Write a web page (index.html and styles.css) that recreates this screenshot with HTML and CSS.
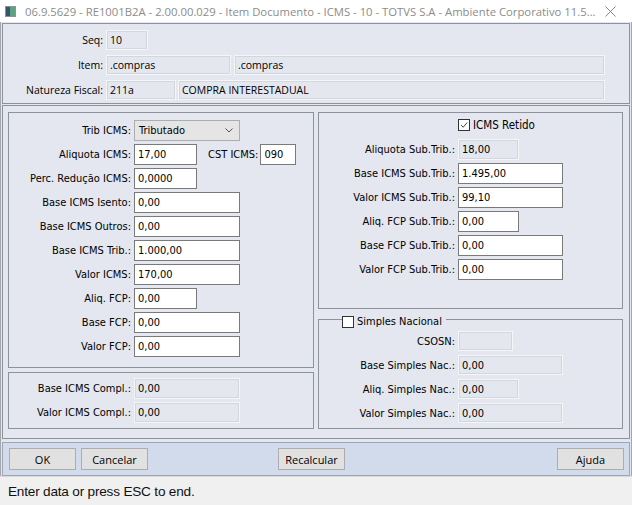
FILE: index.html
```html
<!DOCTYPE html>
<html>
<head>
<meta charset="utf-8">
<link rel="stylesheet" href="styles.css">
</head>
<body>
<div class="window">
  <div class="titlebar">
    <svg class="appicon" viewBox="0 0 11 11"><rect x="0.5" y="0.5" width="10" height="10" fill="#dfe3e8" stroke="#8a939b"/><rect x="1" y="1" width="4" height="9" fill="#35566a"/><rect x="5" y="1" width="5" height="9" fill="#5da383"/></svg>
    <span class="title">06.9.5629 - RE1001B2A - 2.00.00.029 - Item Documento - ICMS - 10 - TOTVS S.A - Ambiente Corporativo 11.5...</span>
    <svg class="close" viewBox="0 0 12 12"><path d="M0.5 0.5 L11.5 11.5 M11.5 0.5 L0.5 11.5" stroke="#7a7a7a" stroke-width="1" fill="none"/></svg>
  </div>
  <div class="client">
    <div class="group topgroup">
      <div class="trow"><span class="tlbl">Seq:</span><span class="fld dis w-seq">10</span></div>
      <div class="trow"><span class="tlbl">Item:</span><span class="fld dis w-item1">.compras</span><span class="fld dis w-item2">.compras</span></div>
      <div class="trow"><span class="tlbl">Natureza Fiscal:</span><span class="fld dis w-nat1">211a</span><span class="fld dis w-nat2">COMPRA INTERESTADUAL</span></div>
    </div>
    <div class="group maingroup">
      <div class="col">
        <div class="box icms">
          <div class="frow"><span class="lbl">Trib ICMS:</span><span class="combo">Tributado<svg class="chev" viewBox="0 0 8 5"><path d="M0.5 0.5 L4 4 L7.5 0.5" stroke="#555" fill="none"/></svg></span></div>
          <div class="frow"><span class="lbl">Aliquota ICMS:</span><span class="fld en w-short">17,00</span><span class="lbl2">CST ICMS:</span><span class="fld en w-cst">090</span></div>
          <div class="frow"><span class="lbl">Perc. Redução ICMS:</span><span class="fld en w-short">0,0000</span></div>
          <div class="frow"><span class="lbl">Base ICMS Isento:</span><span class="fld en w-long">0,00</span></div>
          <div class="frow"><span class="lbl">Base ICMS Outros:</span><span class="fld en w-long">0,00</span></div>
          <div class="frow"><span class="lbl">Base ICMS Trib.:</span><span class="fld en w-long">1.000,00</span></div>
          <div class="frow"><span class="lbl">Valor ICMS:</span><span class="fld en w-long">170,00</span></div>
          <div class="frow"><span class="lbl">Aliq. FCP:</span><span class="fld en w-short">0,00</span></div>
          <div class="frow"><span class="lbl">Base FCP:</span><span class="fld en w-long">0,00</span></div>
          <div class="frow"><span class="lbl">Valor FCP:</span><span class="fld en w-long">0,00</span></div>
        </div>
        <div class="box compl">
          <div class="frow"><span class="lbl">Base ICMS Compl.:</span><span class="fld dis w-long">0,00</span></div>
          <div class="frow"><span class="lbl">Valor ICMS Compl.:</span><span class="fld dis w-long">0,00</span></div>
        </div>
      </div>
      <div class="col">
        <div class="box st">
          <div class="crow"><span class="chk"><svg viewBox="0 0 12 12"><path d="M2.5 6 L5 8.7 L9.8 3" stroke="#333" stroke-width="1.1" fill="none"/></svg></span><span class="clbl">ICMS Retido</span></div>
          <div class="frow"><span class="rlbl">Aliquota Sub.Trib.:</span><span class="fld dis w-rshort">18,00</span></div>
          <div class="frow"><span class="rlbl">Base ICMS Sub.Trib.:</span><span class="fld en w-rlong">1.495,00</span></div>
          <div class="frow"><span class="rlbl">Valor ICMS Sub.Trib.:</span><span class="fld en w-rlong">99,10</span></div>
          <div class="frow"><span class="rlbl">Aliq. FCP Sub.Trib.:</span><span class="fld en w-rshort">0,00</span></div>
          <div class="frow"><span class="rlbl">Base FCP Sub.Trib.:</span><span class="fld en w-rlong">0,00</span></div>
          <div class="frow"><span class="rlbl">Valor FCP Sub.Trib.:</span><span class="fld en w-rlong">0,00</span></div>
        </div>
        <div class="box simples">
          <div class="legend"><span class="chk"></span><span class="clbl">Simples Nacional</span></div>
          <div class="frow"><span class="rlbl">CSOSN:</span><span class="fld dis w-csosn"></span></div>
          <div class="frow"><span class="rlbl">Base Simples Nac.:</span><span class="fld dis w-rlong">0,00</span></div>
          <div class="frow"><span class="rlbl">Aliq. Simples Nac.:</span><span class="fld dis w-rshort">0,00</span></div>
          <div class="frow"><span class="rlbl">Valor Simples Nac.:</span><span class="fld dis w-rlong">0,00</span></div>
        </div>
      </div>
    </div>
    <div class="buttonbar">
      <span class="btn">OK</span>
      <span class="btn">Cancelar</span>
      <span class="btn recalc">Recalcular</span>
      <span class="btn ajuda">Ajuda</span>
    </div>
  </div>
  <div class="statusbar">Enter data or press ESC to end.</div>
</div>
</body>
</html>
```

FILE: styles.css
```css
* { box-sizing: border-box; }
html, body { margin: 0; padding: 0; }
body {
  width: 632px;
  height: 505px;
  overflow: hidden;
  background: #f0f0f0;
  font-family: "DejaVu Sans Condensed", "DejaVu Sans", sans-serif;
  font-size: 11px;
  color: #000;
}
.window { display: flex; flex-direction: column; height: 505px; }

.titlebar {
  height: 22px;
  background: #fff;
  display: flex;
  align-items: center;
  padding-left: 5px;
}
.appicon { width: 11px; height: 11px; margin-right: 9px; flex: none; }
.title {
  font-family: "Open Sans", sans-serif;
  font-size: 11.3px;
  color: #8c8c8c;
  white-space: nowrap;
  flex: 1;
  overflow: hidden;
}
.close { width: 11px; height: 11px; margin: 0 16px 0 8px; flex: none; }

.client {
  background: #e4e7ef;
  border-left: 1px solid #a3a6ad;
  border-right: 1px solid #a3a6ad;
  padding: 1px 1px 0 1px;
  height: 454px;
  display: flex;
  flex-direction: column;
}
.group { border: 1px solid #8e929a; }
.topgroup {
  height: 81px;
  padding-top: 6px;
  display: flex;
  flex-direction: column;
  gap: 5px;
  font-family: "Open Sans", sans-serif;
  font-size: 10.5px;
}
.trow { display: flex; align-items: center; height: 20px; }
.tlbl { width: 100px; text-align: right; margin-right: 3px; flex: none; }
.trow .fld { height: 20px; }
.w-seq { width: 42px; }
.w-item1 { width: 125px; margin-right: 3px; }
.w-item2 { width: 371px; }
.w-nat1 { width: 70px; margin-right: 2px; }
.w-nat2 { width: 427px; }

.maingroup {
  margin-top: 1px;
  height: 334px;
  padding: 6px 0 0 5px;
  display: flex;
  gap: 4px;
}
.col { display: flex; flex-direction: column; }
.box { border: 1px solid #8e929a; }
.icms { width: 306px; height: 256px; padding-top: 7px; }
.compl { width: 306px; height: 57px; margin-top: 4px; padding-top: 5px; }
.st { width: 305px; height: 197px; padding-top: 1px; }
.simples { width: 305px; height: 110px; margin-top: 10px; padding-top: 0; }

.frow { display: flex; align-items: center; height: 21px; margin-bottom: 3px; }
.lbl { width: 122px; text-align: right; margin-right: 3px; flex: none; white-space: nowrap; }
.lbl2 { margin: 0 2px 0 11px; white-space: nowrap; }
.rlbl { width: 136px; text-align: right; margin-right: 3px; flex: none; white-space: nowrap; }

.fld {
  display: flex;
  align-items: center;
  height: 21px;
  padding-left: 3px;
  white-space: nowrap;
  flex: none;
}
.en { background: #fff; border: 1px solid #7a7a7a; }
.dis { background: #e4e7ef; border: 1px solid #f5f6f8; box-shadow: inset 0 0 0 1px #d3d6dc; }
.w-short { width: 63px; }
.w-long { width: 106px; }
.w-cst { width: 36px; }
.w-rshort { width: 61px; }
.w-rlong { width: 105px; }
.w-csosn { width: 55px; }

.combo {
  display: flex;
  align-items: center;
  justify-content: space-between;
  width: 106px;
  height: 21px;
  padding: 0 6px 0 4px;
  background: #e5e5e5;
  border: 1px solid #adadad;
}
.chev { width: 8px; height: 5px; }

.crow { display: flex; align-items: center; height: 21px; margin: 0 0 4px 139px; }
.chk {
  width: 12px;
  height: 12px;
  background: #fff;
  border: 1px solid #333;
  flex: none;
  display: block;
}
.chk svg { display: block; width: 10px; height: 10px; }
.clbl { margin-left: 3px; font-size: 11.5px; }

.legend {
  display: flex;
  align-items: center;
  width: fit-content;
  margin: -5px 0 3px 23px;
  padding: 0 4px 0 0;
  height: 13px;
  background: #e4e7ef;
}
.legend .clbl { font-size: 11px; }
.simples .frow { height: 20px; margin-bottom: 4px; }
.simples .fld { height: 20px; }

.buttonbar {
  margin-top: 3px;
  height: 34px;
  background: #d1dbeb;
  border: 1px solid #9ea6b4;
  display: flex;
  align-items: flex-start;
  padding: 5px 5px 0 6px;
  gap: 5px;
  font-family: "Open Sans", sans-serif;
  font-size: 11px;
}
.btn {
  display: flex;
  align-items: center;
  justify-content: center;
  width: 67px;
  height: 22px;
  background: #e1e1e1;
  border: 1px solid #adadad;
}
.recalc { margin-left: 125px; }
.ajuda { margin-left: auto; }

.statusbar {
  height: 29px;
  border-top: 1px solid #d9d9d9;
  background: #f0f0f0;
  padding-left: 8px;
  display: flex;
  align-items: center;
  font-family: "Liberation Sans", Arial, sans-serif;
  font-size: 13.6px;
  letter-spacing: -0.2px;
  color: #111;
}
```
